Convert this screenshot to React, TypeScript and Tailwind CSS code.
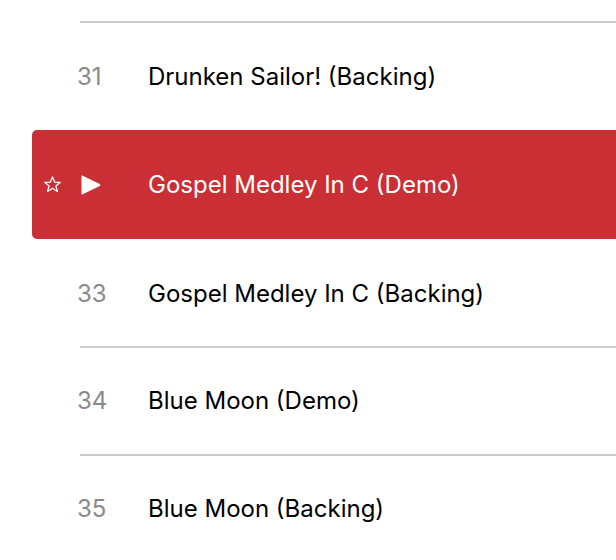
import React from "react";

const font = { fontFamily: "Inter, 'Noto Sans', sans-serif" };

function Row({ num, title, line, h }: { num: string; title: string; line: boolean; h: string }) {
  return (
    <div className={`ml-[80px] flex items-center ${h} ${line ? "border-t-2 border-[#cbcbcb]" : "border-t-2 border-transparent"}`}>
      <div className="-ml-[3px] w-[71px] text-[24px] text-[#8a8a8a]">{num}</div>
      <div className="text-[24px] text-black">{title}</div>
    </div>
  );
}

export default function App() {
  return (
    <div className="w-[616px] h-[560px] overflow-hidden bg-white pt-[21px]" style={font}>
      <Row num="31" title="Drunken Sailor! (Backing)" line h="h-[109px]" />
      <div className="ml-[32px] flex h-[109px] items-center rounded-l-[5px] bg-[#c92f35]">
        <svg className="ml-[11px]" width="19" height="19" viewBox="0 0 24 24" fill="none" stroke="white" strokeWidth="1.6" strokeLinejoin="round">
          <polygon points="12,2.5 14.8,9 21.8,9.3 16.3,13.8 18.2,20.8 12,16.8 5.8,20.8 7.7,13.8 2.2,9.3 9.2,9" />
        </svg>
        <svg className="ml-[18px]" width="21" height="20" viewBox="0 0 21 20">
          <path d="M1.5 1.2 Q1 0.2 2.2 0.6 L19.8 9 Q21 10 19.8 11 L2.2 19.4 Q1 19.8 1.5 18.8 Z" fill="white" />
        </svg>
        <div className="ml-[47px] text-[24px] text-white">Gospel Medley In C (Demo)</div>
      </div>
      <Row num="33" title="Gospel Medley In C (Backing)" line={false} h="h-[107px]" />
      <Row num="34" title="Blue Moon (Demo)" line h="h-[108px]" />
      <Row num="35" title="Blue Moon (Backing)" line h="h-[108px]" />
    </div>
  );
}
